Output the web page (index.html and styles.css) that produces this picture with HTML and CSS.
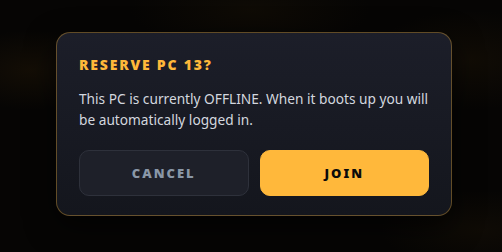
FILE: index.html
```html
<!DOCTYPE html>
<html lang="en">
<head>
<meta charset="utf-8">
<link rel="stylesheet" href="styles.css">
</head>
<body>
<div class="backdrop">
  <div class="dialog">
    <h2 class="title">RESERVE PC 13?</h2>
    <p class="message">This PC is currently OFFLINE. When it boots up you will be automatically logged in.</p>
    <div class="actions">
      <button class="btn btn-cancel">CANCEL</button>
      <button class="btn btn-join">JOIN</button>
    </div>
  </div>
</div>
</body>
</html>
```
FILE: styles.css
```css
html, body {
  margin: 0;
  padding: 0;
  height: 100%;
}
body {
  background: #060504;
  font-family: "Noto Sans", "Open Sans", sans-serif;
}
.backdrop {
  height: 100%;
  box-sizing: border-box;
  padding: 32px 50px 0 56px;
  background:
    radial-gradient(ellipse 80px 40px at 30px 70px, rgba(60,40,10,0.25), transparent),
    radial-gradient(ellipse 100px 50px at 470px 60px, rgba(60,40,10,0.2), transparent),
    radial-gradient(ellipse 120px 40px at 250px 10px, rgba(50,35,10,0.2), transparent),
    radial-gradient(ellipse 100px 40px at 480px 230px, rgba(50,35,10,0.2), transparent),
    #060504;
}
.dialog {
  width: 396px;
  box-sizing: border-box;
  padding: 22px 22px 19px;
  border: 1px solid rgba(255, 184, 58, 0.33);
  border-radius: 14px;
  background: linear-gradient(180deg, #1c1e29 0%, #14161d 100%);
  box-shadow: 0 10px 30px rgba(0,0,0,0.6);
}
.title {
  margin: 0;
  font-size: 14px;
  line-height: 20px;
  font-weight: 900;
  letter-spacing: 1.8px;
  color: #ffb83a;
}
.message {
  margin: 13px 0 0;
  font-size: 13.7px;
  line-height: 21px;
  color: #d3d7df;
}
.actions {
  margin-top: 20px;
  display: flex;
  gap: 11px;
}
.btn {
  flex: 1;
  height: 46px;
  border-radius: 10px;
  font-family: "Noto Sans", "Open Sans", sans-serif;
  font-size: 13px;
  font-weight: 900;
  letter-spacing: 2px;
  cursor: pointer;
}
.btn-cancel {
  background: #1e2029;
  border: 1px solid #2e313b;
  color: #8a97a7;
}
.btn-join {
  background: #ffb83b;
  border: 1px solid #ffb83b;
  color: #0b0b0b;
}
```
